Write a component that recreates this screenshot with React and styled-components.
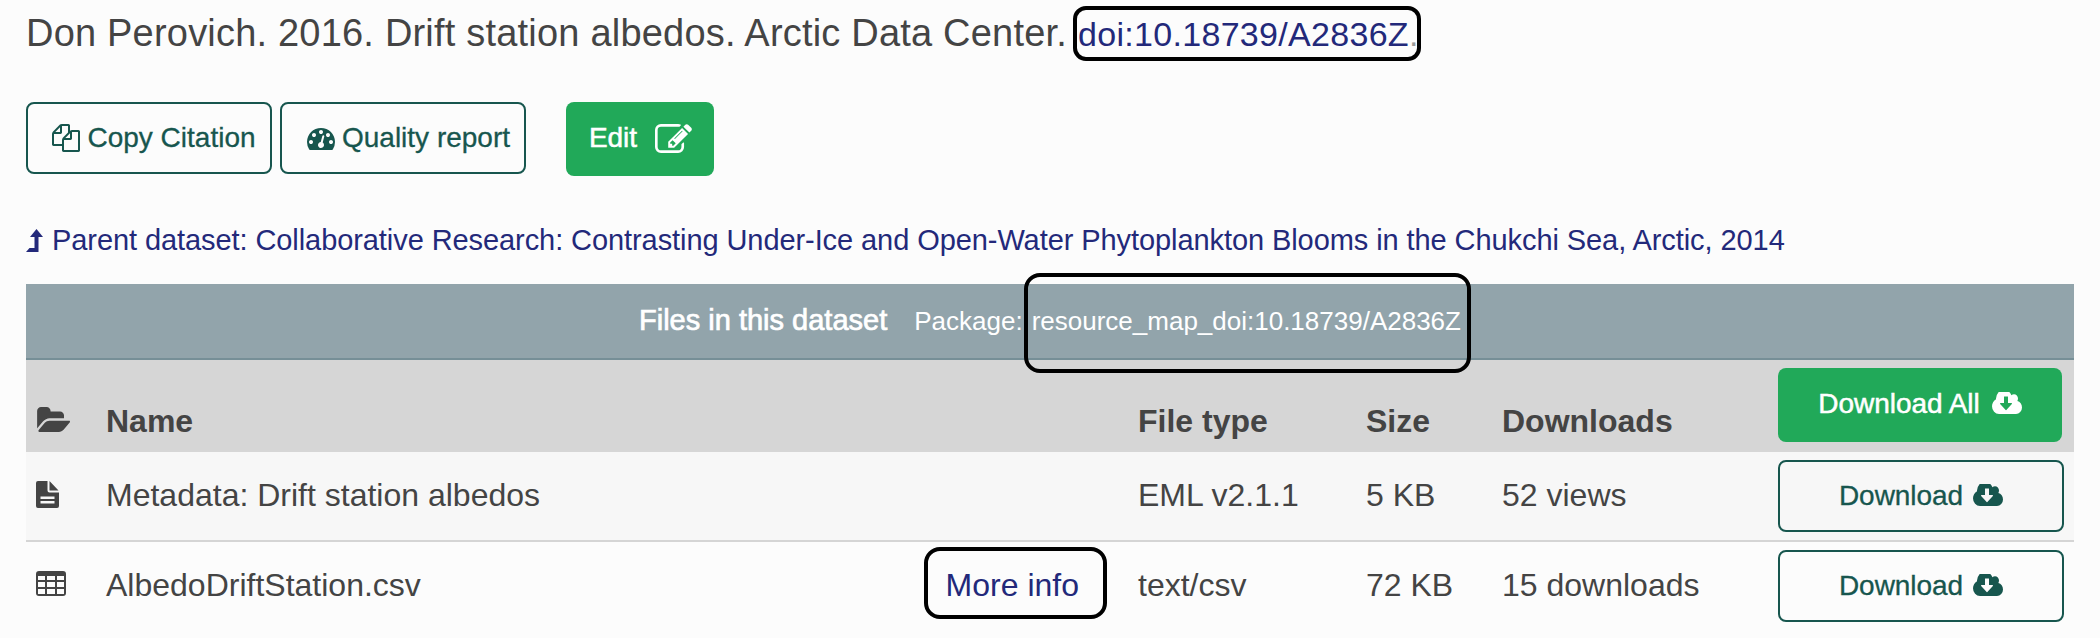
import React from 'react';
import styled, { createGlobalStyle, css } from 'styled-components';

const Global = createGlobalStyle`
  * { box-sizing: border-box; }
  html, body { margin: 0; }
  body {
    background: #fcfcfc;
    color: #444;
    font-family: "Liberation Sans", Arial, Helvetica, sans-serif;
  }
`;

const Page = styled.main`
  width: 2100px;
  height: 638px;
  overflow: hidden;
  padding: 0 26px;
  display: flex;
  flex-direction: column;
`;

const Citation = styled.h1`
  margin: 0;
  height: 66px;
  display: flex;
  align-items: baseline;
  font-size: 38px;
  line-height: 66px;
  font-weight: 400;
  letter-spacing: .2px;
  white-space: nowrap;
`;

const Mark = styled.span`
  position: absolute;
  border: 4px solid #000;
  border-radius: ${p => p.$radius || 16}px;
  inset: ${p => p.$inset};
  pointer-events: none;
`;

const Marked = styled.span`
  position: relative;
  display: inline-block;
`;

const Doi = styled(Marked)`
  margin-left: 11px;
  font-size: 34px;
  line-height: 40px;
  letter-spacing: .3px;
`;

const Link = styled.a`
  color: #23297a;
  text-decoration: none;
`;

const Stop = styled.span`
  color: #999;
`;

const Toolbar = styled.div`
  display: flex;
  align-items: flex-start;
  margin-top: 36px;
  height: 74px;
`;

const Button = styled.button`
  display: flex;
  align-items: center;
  justify-content: center;
  height: 72px;
  padding: 0;
  font: 400 28px/34px "Liberation Sans", Arial, sans-serif;
  -webkit-text-stroke: .3px currentColor;
  color: #17564e;
  background: transparent;
  border: 2px solid #17564e;
  border-radius: 8px;
  white-space: nowrap;
  svg { display: block; fill: currentColor; stroke: none; flex: none; }
  ${p => p.$solid && css`
    height: 74px;
    color: #fff;
    background: #21a959;
    border: 0;
    padding-bottom: 2px;
    -webkit-text-stroke-width: .5px;
  `}
`;

const CopyButton = styled(Button)`
  width: 246px;
  margin-right: 8px;
  padding-left: 10px;
  gap: 7px;
`;

const QualityButton = styled(CopyButton)`
  margin-right: 40px;
  padding-left: 11px;
  svg { margin-top: 2px; }
`;

const EditButton = styled(Button)`
  width: 148px;
  padding-left: 1px;
  gap: 18px;
`;

const Parent = styled.div`
  display: flex;
  align-items: center;
  height: 40px;
  margin-top: 44px;
  margin-bottom: 24px;
  font-size: 29px;
  letter-spacing: -.08px;
  gap: 9px;
  svg { fill: #23297a; }
`;

const Panel = styled.section`
  width: 2048px;
`;

const Caption = styled.header`
  height: 76px;
  padding: 0 0 4px 613px;
  display: flex;
  align-items: baseline;
  line-height: 72px;
  background: #92a4ab;
  border-bottom: 2px solid #768f97;
  color: #fff;
  white-space: nowrap;
`;

const CaptionTitle = styled.h2`
  margin: 0 27px 0 0;
  font-size: 29px;
  font-weight: 400;
  -webkit-text-stroke: .7px #fff;
`;

const Package = styled.span`
  font-size: 26px;
`;

const PackageId = styled(Marked)`
  margin-left: 9px;
  line-height: 34px;
`;

const Row = styled.div`
  display: grid;
  grid-template-columns: 70px 1032px 228px 136px 276px 286px;
  height: 90px;
  padding-left: 10px;
  align-items: start;
  font-size: 32px;
  line-height: 40px;
  padding-top: 8px;
  background: ${p => p.$bg || 'transparent'};
  ${p => p.$line && css`border-bottom: 2px solid #d5d5d5;`}
  ${p => p.$head && css`
    height: 92px;
    font-weight: 700;
    background: #d6d6d6;
  `}
`;

const Cell = styled.div`
  padding-top: ${p => (p.$head ? 33 : 15)}px;
  white-space: nowrap;
  display: flex;
  justify-content: space-between;
`;

const IconCell = styled.div`
  padding-top: ${p => p.$top}px;
  svg { display: block; fill: #444; }
`;

const MoreInfo = styled(Marked)`
  margin-right: 59px;
`;

const DownloadButton = styled(Button)`
  width: ${p => (p.$solid ? 284 : 286)}px;
  gap: ${p => (p.$solid ? 12 : 10)}px;
  letter-spacing: -.05px;
  svg { margin-bottom: 2px; }
`;

function Glyph({ d, box, w, h }) {
  return <svg width={w} height={h} viewBox={box} preserveAspectRatio="none"><path d={d} /></svg>;
}

const COPY = 'M1696 384q40 0 68 28t28 68v1216q0 40-28 68t-68 28h-960q-40 0-68-28t-28-68v-288h-544q-40 0-68-28t-28-68v-672q0-40 20-88t48-76l408-408q28-28 76-48t88-20h416q40 0 68 28t28 68v328q68-40 128-40h416zm-544 213l-299 299h299v-299zm-640-384l-299 299h299v-299zm196 647l316-316v-416h-384v416q0 40-28 68t-68 28h-416v640h512v-256q0-40 20-88t48-76zm956 804v-1152h-384v416q0 40-28 68t-68 28h-416v640h896z';
const GAUGE = 'M384 1152q0-53-37.5-90.5t-90.5-37.5-90.5 37.5-37.5 90.5 37.5 90.5 90.5 37.5 90.5-37.5 37.5-90.5zm192-448q0-53-37.5-90.5t-90.5-37.5-90.5 37.5-37.5 90.5 37.5 90.5 90.5 37.5 90.5-37.5 37.5-90.5zm428 481l101-382q6-26-7.5-48.5t-38.5-29.5-48 6.5-30 39.5l-101 382q-60 5-107 43.5t-63 98.5q-20 77 20 146t117 89 146-20 89-117q16-60-6-117t-72-91zm660-33q0-53-37.5-90.5t-90.5-37.5-90.5 37.5-37.5 90.5 37.5 90.5 90.5 37.5 90.5-37.5 37.5-90.5zm-640-640q0-53-37.5-90.5t-90.5-37.5-90.5 37.5-37.5 90.5 37.5 90.5 90.5 37.5 90.5-37.5 37.5-90.5zm448 192q0-53-37.5-90.5t-90.5-37.5-90.5 37.5-37.5 90.5 37.5 90.5 90.5 37.5 90.5-37.5 37.5-90.5zm320 448q0 261-141 483-19 29-54 29h-1402q-35 0-54-29-141-221-141-483 0-182 71-348t191-286 286-191 348-71 348 71 286 191 191 286 71 348z';
const EDIT = 'M888 1184l116-116-152-152-116 116v56h96v96h56zm440-720q-16-16-33 1l-350 350q-17 17-1 33t33-1l350-350q17-17 1-33zm80 594v190q0 119-84.5 203.5t-203.5 84.5h-832q-119 0-203.5-84.5t-84.5-203.5v-832q0-119 84.5-203.5t203.5-84.5h832q63 0 117 25 15 7 18 23 3 17-9 29l-49 49q-14 14-32 8-23-6-45-6h-832q-66 0-113 47t-47 113v832q0 66 47 113t113 47h832q66 0 113-47t47-113v-126q0-13 9-22l64-64q15-15 35-7t20 29zm-96-738l288 288-672 672h-288v-288zm444 132l-92 92-288-288 92-92q28-28 68-28t68 28l152 152q28 28 28 68t-28 68z';
const FOLDER = 'M1943 952q0 31-31 66l-336 396q-43 51-120.5 86.5t-143.5 35.5h-1088q-34 0-60.5-13t-26.5-43q0-31 31-66l336-396q43-51 120.5-86.5t143.5-35.5h1088q34 0 60.5 13t26.5 43zm-343-344v160h-832q-94 0-197 47.5t-164 119.5l-337 396-5 6q0-4-.5-12.5t-.5-12.5v-960q0-92 66-158t158-66h320q92 0 158 66t66 158v32h544q92 0 158 66t66 158z';
const CLOUD = 'M1216 928q0-14-9-23t-23-9h-224v-352q0-13-9.5-22.5t-22.5-9.5h-192q-13 0-22.5 9.5t-9.5 22.5v352h-224q-13 0-22.5 9.5t-9.5 22.5q0 14 9 23l352 352q9 9 23 9t23-9l351-351q10-12 10-24zm640 224q0 159-112.5 271.5t-271.5 112.5h-1088q-185 0-316.5-131.5t-131.5-316.5q0-130 70-240t188-165q-2-30-2-43 0-212 150-362t362-150q156 0 285.5 87t188.5 231q71-62 166-62 106 0 181 75t75 181q0 76-41 138 130 31 213.5 135.5t83.5 238.5z';

const Cloud = () => <Glyph d={CLOUD} box="-64 256 1920 1280" w={30} h={22} />;

export default function App() {
  return (
    <Page>
      <Global />
      <Citation>
        <span>Don Perovich. 2016. Drift station albedos. Arctic Data Center.</span>
        <Doi>
          <Link>doi:10.18739/A2836Z</Link><Stop>.</Stop>
          <Mark $inset="-8px -2px -7px -5px" $radius={13} />
        </Doi>
      </Citation>

      <Toolbar>
        <CopyButton><Glyph d={COPY} box="0 0 1792 1792" w={28} h={28} /><span>Copy Citation</span></CopyButton>
        <QualityButton><Glyph d={GAUGE} box="0 256 1792 1408" w={28} h={22} /><span>Quality report</span></QualityButton>
        <EditButton $solid><span>Edit</span><Glyph d={EDIT} box="0 128 1792 1408" w={37} h={29} /></EditButton>
      </Toolbar>

      <Parent>
        <svg width="17" height="23" viewBox="0 0 17 23"><path d="M10.5 0 L17 8 H12.5 V23 H0 L3.5 19 H8.5 V8 H4 Z" /></svg>
        <Link>Parent dataset: Collaborative Research: Contrasting Under-Ice and Open-Water Phytoplankton Blooms in the Chukchi Sea, Arctic, 2014</Link>
      </Parent>

      <Panel>
        <Caption>
          <CaptionTitle>Files in this dataset</CaptionTitle>
          <Package>Package:
            <PackageId>
              resource_map_doi:10.18739/A2836Z
              <Mark $inset="-31px -10px -35px -8px" />
            </PackageId>
          </Package>
        </Caption>
        <Row $head>
          <IconCell $top={39}><Glyph d={FOLDER} box="0 128 1943 1408" w={34} h={25} /></IconCell>
          <Cell $head>Name</Cell>
          <Cell $head>File type</Cell>
          <Cell $head>Size</Cell>
          <Cell $head>Downloads</Cell>
          <DownloadButton $solid><span>Download All</span><Cloud /></DownloadButton>
        </Row>
        <Row $bg="#f7f7f7" $line>
          <IconCell $top={21}>
            <svg width="23" height="27" viewBox="0 0 23 27"><path fillRule="evenodd" d="M2 0H11.5V9.5Q11.5 11.5 13.5 11.5H23V25Q23 27 21 27H2Q0 27 0 25V2Q0 0 2 0ZM13.5 0L22.5 9.5H13.5ZM4.5 15.5V18H18.5V15.5ZM4.5 20V22.5H18.5V20Z" /></svg>
          </IconCell>
          <Cell>Metadata: Drift station albedos</Cell>
          <Cell>EML v2.1.1</Cell>
          <Cell>5 KB</Cell>
          <Cell>52 views</Cell>
          <DownloadButton><span>Download</span><Cloud /></DownloadButton>
        </Row>
        <Row>
          <IconCell $top={21}>
            <svg width="30" height="25" viewBox="0 0 30 25"><path fillRule="evenodd" d="M3 0H27Q30 0 30 3V22Q30 25 27 25H3Q0 25 0 22V3Q0 0 3 0ZM2 5V9H9V5ZM11 5V9H19V5ZM21 5V9H28V5ZM2 11V16H9V11ZM11 11V16H19V11ZM21 11V16H28V11ZM2 18V23H9V18ZM11 18V23H19V18ZM21 18V23H28V18Z" /></svg>
          </IconCell>
          <Cell>
            <span>AlbedoDriftStation.csv</span>
            <MoreInfo><Link>More info</Link><Mark $inset="-18px -28px -14px -22px" /></MoreInfo>
          </Cell>
          <Cell>text/csv</Cell>
          <Cell>72 KB</Cell>
          <Cell>15 downloads</Cell>
          <DownloadButton><span>Download</span><Cloud /></DownloadButton>
        </Row>
      </Panel>
    </Page>
  );
}
